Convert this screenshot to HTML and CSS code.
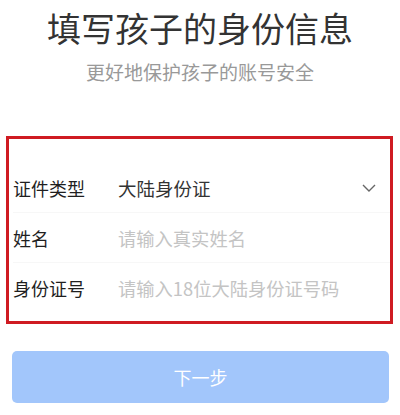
FILE: index.html
```html
<!DOCTYPE html>
<html lang="zh">
<head>
<meta charset="utf-8">
<link rel="stylesheet" href="styles.css">
</head>
<body>
<div class="page">
  <h1 class="title">填写孩子的身份信息</h1>
  <p class="subtitle">更好地保护孩子的账号安全</p>
  <div class="form">
    <div class="row">
      <span class="label">证件类型</span>
      <span class="value">大陆身份证</span>
      <svg class="chev" width="14" height="8" viewBox="0 0 14 8"><path d="M1 1 L7 7 L13 1" fill="none" stroke="#666" stroke-width="1.4"/></svg>
    </div>
    <div class="row">
      <span class="label">姓名</span>
      <span class="placeholder">请输入真实姓名</span>
    </div>
    <div class="row last">
      <span class="label">身份证号</span>
      <span class="placeholder">请输入18位大陆身份证号码</span>
    </div>
  </div>
  <div class="btn">下一步</div>
</div>
</body>
</html>
```
FILE: styles.css
```css
html, body {
  margin: 0;
  padding: 0;
  background: #fff;
}
body {
  font-family: "Noto Sans CJK SC", "Noto Sans", sans-serif;
  width: 400px;
  height: 415px;
  overflow: hidden;
}
.page {
  display: flex;
  flex-direction: column;
}
.title {
  margin: 8px 0 0;
  font-size: 34px;
  line-height: 40px;
  font-weight: 400;
  color: #333;
  text-align: center;
}
.subtitle {
  margin: 11px 0 0;
  font-size: 19px;
  line-height: 26px;
  color: #999;
  text-align: center;
}
.form {
  margin: 51px 7px 0 6px;
  border: 3px solid #cf1b22;
  padding: 24px 0 8px 4px;
  display: flex;
  flex-direction: column;
}
.row {
  height: 50px;
  display: flex;
  align-items: center;
  font-size: 18px;
  border-bottom: 1px solid #f7f7f7;
  box-sizing: border-box;
}
.row.last {
  border-bottom: none;
}
.label {
  width: 105px;
  color: #1f1f1f;
  flex: none;
}
.value {
  color: #333;
  font-size: 18.5px;
  flex: 1;
}
.placeholder {
  color: #c4c4c4;
  font-size: 18.3px;
  flex: 1;
}
.chev {
  margin-right: 14px;
}
.btn {
  margin: 27px 11px 0 12px;
  height: 52px;
  border-radius: 5px;
  background: #a2c6fb;
  color: #fff;
  font-size: 18px;
  display: flex;
  align-items: center;
  justify-content: center;
}
```
